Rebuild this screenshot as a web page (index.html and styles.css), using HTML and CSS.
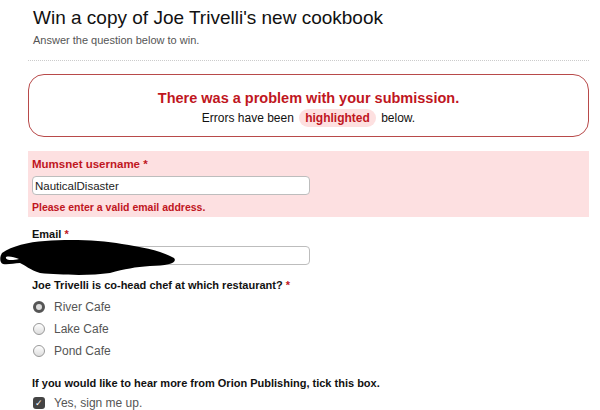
FILE: index.html
```html
<!DOCTYPE html>
<html lang="en">
<head>
  <meta charset="UTF-8">
  <meta name="viewport" content="width=device-width, initial-scale=1.0">
  <title>Win a copy of Joe Trivelli's new cookbook</title>
  <link rel="stylesheet" href="styles.css">
</head>
<body>
  <div class="page">
    <div class="intro">
      <h1>Win a copy of Joe Trivelli's new cookbook</h1>
      <p class="lead">Answer the question below to win.</p>
    </div>

    <div class="error-box">
      <h2>There was a problem with your submission.</h2>
      <p>Errors have been <span class="hl">highlighted</span> below.</p>
    </div>

    <div class="field field-error">
      <label>Mumsnet username <span class="req">*</span></label>
      <input type="text" value="NauticalDisaster">
      <div class="msg">Please enter a valid email address.</div>
    </div>

    <div class="field field-email">
      <label>Email <span class="req">*</span></label>
      <input type="text" value="">
      <svg class="redact" width="180" height="38" viewBox="0 0 180 38">
        <path d="M2 15 C12 8 28 4 45 3 C70 1 100 2 122 6 C142 9 162 13 174 20 C178 25 168 28 150 28 C135 29 125 31 110 35 C90 38 60 37 40 35 C30 32 25 27 20 25 C14 25 8 27 3 26 C-1 24 0 18 2 15 Z M6 19 C5 22 11 23 19 21 C14 19 9 18 6 19 Z" fill="#000" fill-rule="evenodd"/>
      </svg>
    </div>

    <div class="field field-q">
      <label>Joe Trivelli is co-head chef at which restaurant? <span class="req">*</span></label>
      <ul class="choices">
        <li><span class="radio checked"></span>River Cafe</li>
        <li><span class="radio"></span>Lake Cafe</li>
        <li><span class="radio"></span>Pond Cafe</li>
      </ul>
    </div>

    <div class="field field-opt">
      <label>If you would like to hear more from Orion Publishing, tick this box.</label>
      <ul class="choices">
        <li><span class="check">&#10003;</span>Yes, sign me up.</li>
      </ul>
    </div>
  </div>
</body>
</html>
```

FILE: styles.css
```css
* {
  box-sizing: border-box;
}
body {
  margin: 0;
  font-family: 'Liberation Sans', Arial, sans-serif;
  color: #111;
  background: #fff;
  overflow: hidden;
}
.page {
  padding: 7px 11px 0 28px;
}
.intro {
  padding: 0 5px 14px;
  border-bottom: 1px dotted #ccc;
}
h1 {
  margin: 0;
  font-size: 19px;
  font-weight: normal;
  line-height: 22px;
}
.lead {
  margin: 5px 0 0;
  font-size: 11px;
  color: #555;
}
.error-box {
  margin-top: 13px;
  height: 63px;
  border: 1px solid #b84a4a;
  border-radius: 16px;
  text-align: center;
  padding-top: 14px;
}
.error-box h2 {
  margin: 0;
  font-size: 14.5px;
  color: #c0161e;
  line-height: 18px;
}
.error-box p {
  margin: 2px 0 0;
  font-size: 12px;
  line-height: 18px;
}
.hl {
  display: inline-block;
  background: #fde0e0;
  color: #c0161e;
  font-weight: bold;
  border-radius: 9px;
  padding: 0 6px;
  margin: 0 2px;
}
.field {
  padding: 0 4px;
  position: relative;
}
.field label {
  display: block;
  font-size: 11px;
  font-weight: bold;
  line-height: 14px;
}
.req {
  color: #c0161e;
}
.field input {
  display: block;
  width: 278px;
  height: 19px;
  margin-top: 5px;
  border: 1px solid #bdbdbd;
  border-radius: 4px;
  background: #fff;
  font-family: inherit;
  font-size: 11.5px;
  color: #222;
  padding: 0 2px;
}
.field-error {
  margin-top: 14px;
  background: #fde0e1;
  padding-top: 6px;
  height: 66px;
}
.field-error label {
  color: #c0161e;
  font-size: 11.5px;
}
.field-error .msg {
  color: #c0161e;
  font-size: 10.5px;
  font-weight: bold;
  margin-top: 6px;
}
.field-email {
  margin-top: 10px;
}
.redact {
  position: absolute;
  left: -28px;
  top: 11px;
}
.field-q {
  margin-top: 13px;
}
.choices {
  list-style: none;
  margin: 4px 0 0;
  padding: 0;
}
.choices li {
  display: flex;
  align-items: center;
  height: 22px;
  font-size: 12px;
  color: #555;
}
.radio {
  width: 12px;
  height: 12px;
  border: 1px solid #999;
  border-radius: 50%;
  background: linear-gradient(#fff, #ddd);
  margin: 0 9px 0 1px;
}
.radio.checked {
  border: 3px solid #555;
  background: #ddd;
}
.field-opt {
  margin-top: 14px;
}
.field-opt .choices {
  margin-top: 2px;
}
.check {
  width: 12px;
  height: 12px;
  border-radius: 3px;
  background: #444;
  color: #fff;
  font-size: 9px;
  line-height: 12px;
  text-align: center;
  margin: 0 9px 0 1px;
}
```
